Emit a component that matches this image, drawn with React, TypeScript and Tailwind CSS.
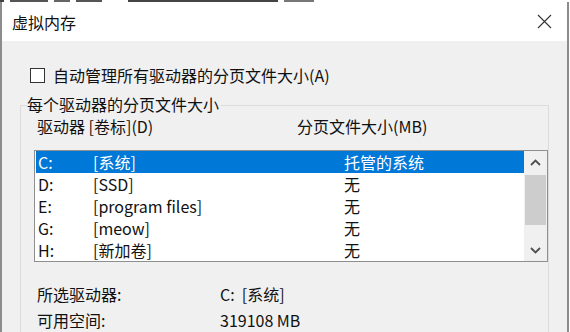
const font = { fontFamily: '"Noto Sans CJK SC", "Noto Sans", sans-serif' };

const drives = [
  { letter: "C:", label: "[系统]", size: "托管的系统" },
  { letter: "D:", label: "[SSD]", size: "无" },
  { letter: "E:", label: "[program files]", size: "无" },
  { letter: "G:", label: "[meow]", size: "无" },
  { letter: "H:", label: "[新加卷]", size: "无" },
];

const Chevron = ({ up }: { up?: boolean }) => (
  <svg width="11" height="7" viewBox="0 0 11 7" fill="none">
    <path
      d={up ? "M1 6 L5.5 1.5 L10 6" : "M1 1 L5.5 5.5 L10 1"}
      stroke="#505050"
      strokeWidth="1.8"
    />
  </svg>
);

const App = () => {
  return (
    <div
      className="w-[570px] h-[332px] overflow-hidden bg-white flex flex-col text-[16px] text-[#111]"
      style={font}
    >
      {/* edge of whatever is behind the dialog */}
      <div className="h-[3px] flex items-start gap-[6px] bg-white">
        <div className="h-[2px] w-[4px] bg-[#444]" />
        <div className="h-[2px] w-[38px] bg-[#555]" />
        <div className="h-[2px] w-[16px] bg-[#666]" />
        <div className="h-[2px] w-[26px] bg-[#555]" />
        <div className="h-[2px] w-[150px] ml-[20px] bg-[#444]" />
        <div className="h-[2px] w-[30px] bg-[#777]" />
      </div>

      <div className="flex-1 flex flex-col border-l-2 border-r-2 border-[#8c8c8c] mr-[1px]">
        {/* title bar */}
        <div className="h-[39px] bg-white flex items-center justify-between pl-[10px] pr-[15px]">
          <span className="leading-none">虚拟内存</span>
          <svg width="15" height="15" viewBox="0 0 15 15">
            <path d="M1 1 L14 14 M14 1 L1 14" stroke="#333" strokeWidth="1.1" />
          </svg>
        </div>

        {/* body */}
        <div className="flex-1 bg-[#f0f0f0] flex flex-col">
          <div className="mt-[24px] h-[20px] flex items-center pl-[28px] gap-[8px]">
            <div className="w-[15px] h-[15px] border border-[#333] bg-white" />
            <span className="leading-none">自动管理所有驱动器的分页文件大小(A)</span>
          </div>

          <div className="relative mt-[20px] mx-[18px] border border-[#dcdcdc] flex-1">
            <span className="absolute left-[6px] -top-[10px] h-[16px] leading-none bg-[#f0f0f0] pr-[2px]">
              每个驱动器的分页文件大小
            </span>

            <div className="mt-[11px] h-[18px] flex items-center pl-[16px]">
              <span className="w-[260px] leading-none">驱动器 [卷标](D)</span>
              <span className="leading-none">分页文件大小(MB)</span>
            </div>

            <div className="mt-[15px] ml-[13px] border border-[#8f8f8f] bg-white flex h-[112px]">
              <div className="flex-1 flex flex-col">
                {drives.map((d, i) => (
                  <div
                    key={d.letter}
                    className={
                      i === 0
                        ? "h-[22px] flex items-center bg-[#0078d7] text-white ml-[1px]"
                        : "h-[22px] flex items-center ml-[1px]"
                    }
                  >
                    <span className="w-[57px] pl-[2px] leading-none">{d.letter}</span>
                    <span className="w-[251px] leading-none">{d.label}</span>
                    <span className="leading-none">{d.size}</span>
                  </div>
                ))}
              </div>
              <div className="w-[23px] bg-[#f0f0f0] flex flex-col items-center">
                <div className="h-[22px] w-full flex items-center justify-center">
                  <Chevron up />
                </div>
                <div className="mt-[2px] h-[50px] w-[21px] bg-[#cdcdcd]" />
                <div className="flex-1" />
                <div className="h-[22px] w-full flex items-center justify-center">
                  <Chevron />
                </div>
              </div>
            </div>

            <div className="mt-[19px] h-[26px] flex items-center pl-[16px]">
              <span className="w-[183px] leading-none">所选驱动器:</span>
              <span className="leading-none">C:&nbsp;&nbsp;[系统]</span>
            </div>
            <div className="h-[26px] flex items-center pl-[16px]">
              <span className="w-[183px] leading-none">可用空间:</span>
              <span className="leading-none">319108 MB</span>
            </div>
          </div>
        </div>
      </div>
    </div>
  );
};

export default App;
